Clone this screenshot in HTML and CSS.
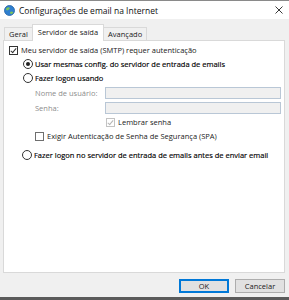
FILE: index.html
```html
<!DOCTYPE html>
<html lang="pt">
<head>
    <meta charset="UTF-8">
    <title>Configurações de email na Internet</title>
    <link rel="stylesheet" href="styles.css">
</head>
<body>
    <div class="window">
        <div class="titlebar">
            <svg class="app-icon" width="11" height="11" viewBox="0 0 11 11">
                <circle cx="5.5" cy="5.5" r="5" fill="#2f7fd0"/>
                <path d="M2 3.5 Q4 1.5 6 3 Q5 5 3 5.5 Q1.8 5 2 3.5Z" fill="#7cc45a"/>
                <path d="M6 7 Q8 6 9.5 7.5 Q8 9.5 6.5 9 Z" fill="#7cc45a"/>
                <circle cx="5.5" cy="5.5" r="5" fill="none" stroke="#1d5fa3" stroke-width="0.8"/>
            </svg>
            <span class="title">Configurações de email na Internet</span>
            <span class="close">
                <svg width="8" height="8" viewBox="0 0 8 8">
                    <path d="M0.5 0.5 L7.5 7.5 M7.5 0.5 L0.5 7.5" stroke="#222" stroke-width="0.9"/>
                </svg>
            </span>
        </div>

        <div class="content">
            <div class="tabs">
                <div class="tab">Geral</div>
                <div class="tab active">Servidor de saída</div>
                <div class="tab">Avançado</div>
            </div>

            <div class="panel">
                <div class="row">
                    <span class="box checked"></span>
                    <span>Meu servidor de saída (SMTP) requer autenticação</span>
                </div>
                <div class="row indent-radio">
                    <span class="radio on"></span>
                    <span class="strong">Usar mesmas config. do servidor de entrada de emails</span>
                </div>
                <div class="row indent-radio">
                    <span class="radio"></span>
                    <span class="strong">Fazer logon usando</span>
                </div>
                <div class="field first">
                    <span class="field-label">Nome de usuário:</span>
                    <span class="input"></span>
                </div>
                <div class="field">
                    <span class="field-label">Senha:</span>
                    <span class="input"></span>
                </div>
                <div class="row indent-remember">
                    <span class="box checked disabled"></span>
                    <span>Lembrar senha</span>
                </div>
                <div class="row indent-spa">
                    <span class="box"></span>
                    <span>Exigir Autenticação de Senha de Segurança (SPA)</span>
                </div>
                <div class="row indent-last">
                    <span class="radio"></span>
                    <span class="strong">Fazer logon no servidor de entrada de emails antes de enviar email</span>
                </div>
            </div>

            <div class="buttons">
                <button class="btn default">OK</button>
                <button class="btn">Cancelar</button>
            </div>
        </div>
    </div>
</body>
</html>
```

FILE: styles.css
```css
body {
    margin: 0;
    font-family: "Open Sans", "Noto Sans", sans-serif;
    font-size: 7.5px;
    color: #1a1a1a;
}

.window {
    width: 289px;
    height: 300px;
    box-sizing: border-box;
    border-top: 1px solid #8a8a8a;
    border-bottom: 3px solid #5b5b5b;
    background: #f0f0f0;
    display: flex;
    flex-direction: column;
}

.titlebar {
    height: 18px;
    background: #fff;
    display: flex;
    align-items: center;
    padding-left: 4px;
}

.app-icon {
    margin-right: 4px;
}

.title {
    font-size: 8.5px;
    color: #111;
}

.close {
    margin-left: auto;
    width: 20px;
    display: flex;
    justify-content: center;
    margin-right: 0;
}

.content {
    flex: 1;
    display: flex;
    flex-direction: column;
    padding: 0 4px 0 3px;
}

.tabs {
    height: 21px;
    display: flex;
    align-items: flex-end;
    padding-left: 1px;
}

.tab {
    height: 13px;
    line-height: 13px;
    padding: 0 4px;
    border: 1px solid #d9d9d9;
    border-bottom: none;
    background: #f0f0f0;
    margin-bottom: -1px;
}

.tab.active {
    height: 16px;
    line-height: 14px;
    background: #fff;
    position: relative;
    z-index: 1;
    border-left: 1px solid #d9d9d9;
    padding: 0 5px;
    margin: 0 -1px -1px -1px;
}

.panel {
    height: 229px;
    background: #fff;
    border: 1px solid #d9d9d9;
    padding-top: 2px;
    padding-left: 5px;
}

.row {
    display: flex;
    align-items: center;
    height: 14px;
    white-space: nowrap;
}

.strong {
    color: #000;
    -webkit-text-stroke: 0.15px #000;
}

.indent-radio {
    padding-left: 14px;
}

.indent-remember {
    padding-left: 97px;
    margin-top: 1px;
}

.indent-spa {
    padding-left: 26px;
}

.indent-last {
    padding-left: 13px;
    margin-top: 5px;
}

.box {
    width: 7px;
    height: 7px;
    border: 1px solid #333;
    margin-right: 3px;
    position: relative;
    flex: none;
}

.indent-spa .box {
    border-color: #6f6f6f;
}

.box.checked::after {
    content: "";
    position: absolute;
    left: 2px;
    top: 0;
    width: 2px;
    height: 5px;
    border: solid #333;
    border-width: 0 1px 1px 0;
    transform: rotate(40deg);
}

.box.disabled {
    border-color: #c3c3c3;
}

.box.disabled::after {
    border-color: #b5b5b5;
}

.radio {
    width: 8px;
    height: 8px;
    border: 1px solid #333;
    border-radius: 50%;
    margin-right: 2px;
    position: relative;
    flex: none;
}

.radio.on::after {
    content: "";
    position: absolute;
    left: 2px;
    top: 2px;
    width: 4px;
    height: 4px;
    border-radius: 50%;
    background: #222;
}

.field {
    display: flex;
    align-items: center;
    height: 12px;
    margin-top: 3px;
    padding-left: 26px;
}

.field.first {
    margin-top: 2px;
}

.field-label {
    width: 70px;
    color: #8d8d8d;
}

.input {
    width: 174px;
    height: 10px;
    border: 1px solid #b9c7d6;
    background: #f0f0f0;
}

.buttons {
    display: flex;
    justify-content: flex-end;
    gap: 6px;
    margin-top: 6px;
    padding-right: 0;
}

.btn {
    width: 50px;
    height: 14px;
    padding: 0;
    font-family: inherit;
    font-size: 7.5px;
    color: #1a1a1a;
    background: #e1e1e1;
    border: 1px solid #adadad;
}

.btn.default {
    border: 1px solid #0078d7;
    box-shadow: inset 0 0 0 1px #0078d7;
}
```
